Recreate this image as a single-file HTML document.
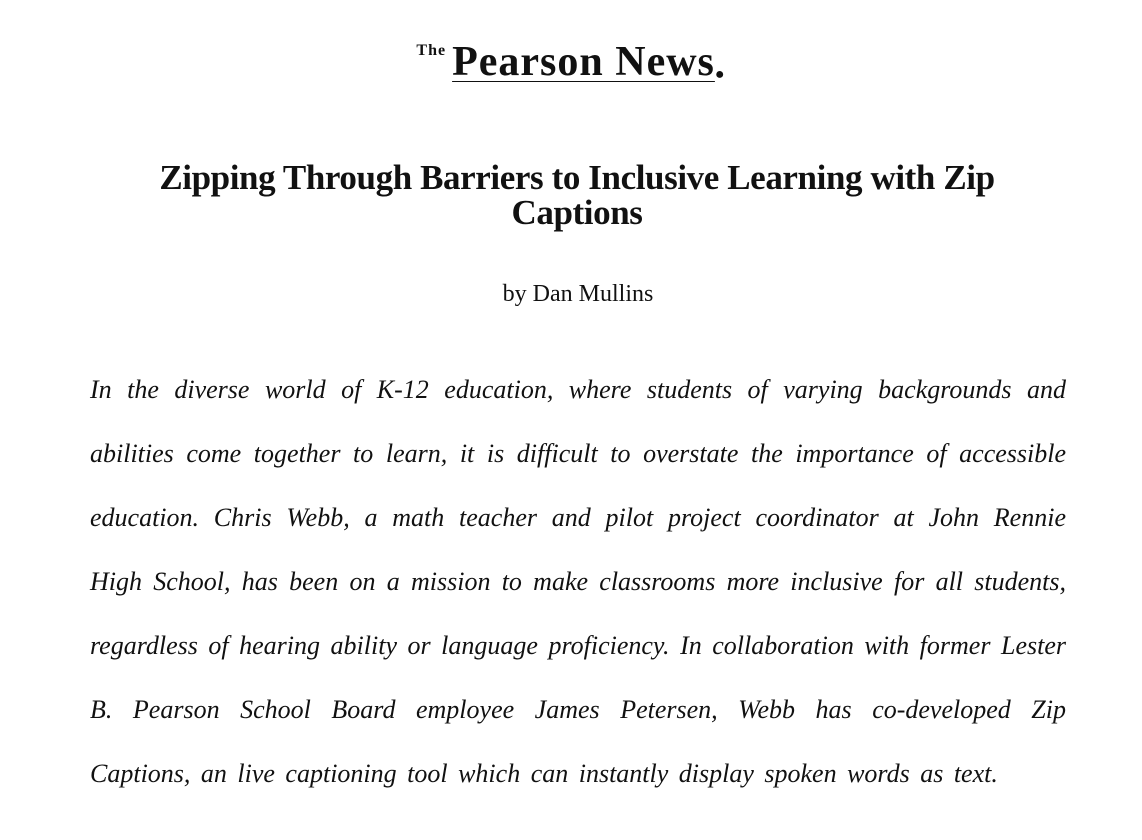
<!DOCTYPE html>
<html><head><meta charset="utf-8"><style>
body{margin:0;background:#fff;color:#111;font-family:"Liberation Serif",serif;width:1142px;height:840px;overflow:hidden}
.logo{position:absolute;top:38px;left:0;width:1142px;text-align:center;font-weight:bold;font-size:42px;letter-spacing:1px}
.logo small{font-size:16px;vertical-align:20px;margin-right:6px}
.logo span{text-decoration:underline;text-decoration-thickness:1px;text-underline-offset:6px}
h1{position:absolute;top:160px;left:141px;width:872px;margin:0;text-align:center;font-size:35px;line-height:35px;font-weight:bold;letter-spacing:-0.4px}
.by{position:absolute;top:281px;left:0;width:1156px;text-align:center;font-size:24px}
.body{position:absolute;top:370px;left:90px;width:976px;font-style:italic;font-size:26px}
.body div{height:64px;line-height:40px;text-align:justify;text-align-last:justify}
.body div.l{text-align-last:left;word-spacing:4px}
</style></head><body>
<div class="logo"><small>The</small><span>Pearson News</span><small style="vertical-align:-4px;margin:0">●</small></div>
<h1>Zipping Through Barriers to Inclusive Learning with Zip Captions</h1>
<div class="by">by Dan Mullins</div>
<div class="body">
<div>In the diverse world of K-12 education, where students of varying backgrounds and</div>
<div>abilities come together to learn, it is difficult to overstate the importance of accessible</div>
<div>education. Chris Webb, a math teacher and pilot project coordinator at John Rennie</div>
<div>High School, has been on a mission to make classrooms more inclusive for all students,</div>
<div>regardless of hearing ability or language proficiency. In collaboration with former Lester</div>
<div>B. Pearson School Board employee James Petersen, Webb has co-developed Zip</div>
<div class="l">Captions, an live captioning tool which can instantly display spoken words as text.</div>
</div>
</body></html>
